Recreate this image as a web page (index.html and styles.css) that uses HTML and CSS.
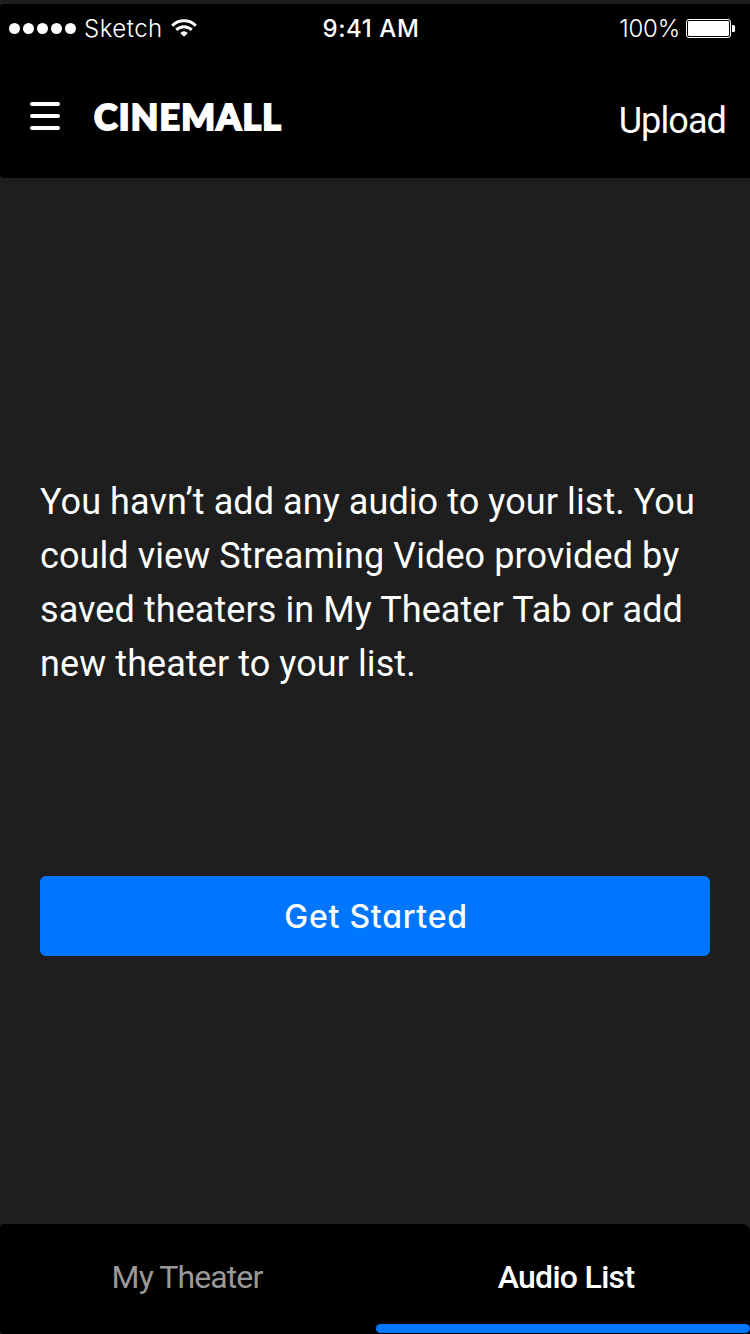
FILE: index.html
```html
<!DOCTYPE html>
<html lang="en">
<head>
<meta charset="utf-8">
<title>Cinemall</title>
<link rel="stylesheet" href="styles.css">
</head>
<body>
<div class="screen">
  <header class="header">
    <div class="status">
      <div class="carrier">
        <span class="signal"><i></i><i></i><i></i><i></i><i></i></span>
        <span class="carrier-name">Sketch</span>
        <svg class="wifi" width="26" height="18" viewBox="0 0 26 18" fill="none" stroke="#fff" stroke-width="3">
          <path d="M1.2 6.7a16.7 16.7 0 0 1 23.6 0"/>
          <path d="M5.3 10.9a10.9 10.9 0 0 1 15.4 0"/>
          <path d="M13 17.8l-3.8-3.9a5.4 5.4 0 0 1 7.6 0z" fill="#fff" stroke="none"/>
        </svg>
      </div>
      <span class="time">9:41 AM</span>
      <div class="power">
        <span class="percent">100%</span>
        <svg width="50" height="20" viewBox="0 0 50 20">
          <rect x=".5" y=".5" width="44" height="18" rx="2.5" fill="none" stroke="#fff"/>
          <rect x="2" y="2" width="41" height="15" rx="1.2" fill="#fff"/>
          <path d="M46 6h1.5a1.5 1.5 0 0 1 1.5 1.5v4a1.5 1.5 0 0 1-1.5 1.5H46z" fill="#fff"/>
        </svg>
      </div>
    </div>
    <nav class="navbar">
      <div class="menu"><i></i><i></i><i></i></div>
      <span class="logo">CINEMALL</span>
      <span class="upload">Upload</span>
    </nav>
  </header>
  <main class="content">
    <p class="message">You havn’t add any audio to your list. You<br>could view Streaming Video provided by<br>saved theaters in My Theater Tab or add<br>new theater to your list.</p>
    <button class="start"><span class="start-label">Get Started</span></button>
  </main>
  <footer class="tabs">
    <div class="tab">My Theater</div>
    <div class="tab tab-active"><span class="tab-label">Audio List</span></div>
  </footer>
</div>
</body>
</html>
```
FILE: styles.css
```css
* { box-sizing: border-box; }
body { margin: 0; background: #1e1e1e; color: #fff; font-family: Roboto, sans-serif; }
.screen { width: 750px; height: 1334px; padding-top: 4px; display: flex; flex-direction: column; overflow: hidden; }
.header { height: 174px; background: #000; border-radius: 4px 0 0 4px; }
.status { height: 50px; display: grid; grid-template-columns: 1fr auto 1fr; align-items: center; padding: 0 14px 0 9px; font-family: Inter, sans-serif; font-size: 24px; line-height: 30px; }
.carrier, .power { display: flex; align-items: center; }
.signal { display: flex; gap: 3px; }
.signal i { width: 11px; height: 11px; margin-top: -1px; border-radius: 50%; background: #fff; }
.carrier-name { margin-left: 8px; letter-spacing: .5px; font-weight: 300; }
.wifi { margin-left: 8.5px; margin-top: -2px; }
.time { font-weight: 500; letter-spacing: .6px; margin-right: 3px; }
.power { justify-content: flex-end; gap: 6px; }
.percent { font-weight: 300; letter-spacing: -.2px; }
.navbar { height: 124px; display: flex; align-items: flex-start; padding: 48px 24px 0 30px; }
.menu { width: 30px; display: flex; flex-direction: column; gap: 8px; }
.menu i { height: 4px; border-radius: 2px; background: #fff; }
.logo { margin: -5px 0 0 34px; font: 900 35.5px/40px Lato, sans-serif; letter-spacing: 1.3px; -webkit-text-stroke: 2px #fff; }
.upload { margin: -3px 0 0 auto; font-size: 36px; line-height: 44px; letter-spacing: -.9px; }
.content { flex: 1; padding: 297px 40px 0; }
.message { margin: 0; font-size: 36px; line-height: 54px; letter-spacing: .08px; white-space: nowrap; }
.start { display: flex; width: 670px; height: 80px; margin-top: 185px; align-items: center; justify-content: center; padding: 2px 0 0 2px; border: 0; border-radius: 6px; background: #0076ff; color: #fff; }
.start-label { font: 500 32px/40px Inter, sans-serif; font-feature-settings: "cv11"; letter-spacing: .75px; }
.tabs { height: 110px; display: flex; background: #000; border-radius: 4px 8px 0 4px; font-size: 32px; }
.tab { width: 376px; height: 109px; padding: 34px 2px 0 0; text-align: center; line-height: 38px; letter-spacing: -.9px; color: #999; }
.tab-active { width: 374px; padding-right: 0; color: #fff; font-weight: 500; letter-spacing: -.7px; display: flex; flex-direction: column; align-items: center; }
.tab-label { padding-left: 6px; }
.tab-active::after { content: ""; align-self: stretch; height: 9px; margin-top: auto; background: #0076ff; border-radius: 4.5px; }
```
